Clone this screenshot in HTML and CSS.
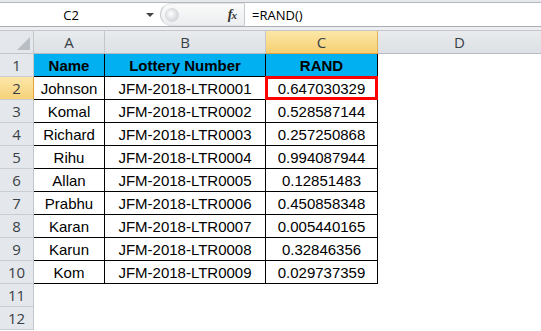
FILE: index.html
```html
<!DOCTYPE html>
<html>
<head>
<meta charset="utf-8">
<link rel="stylesheet" href="styles.css">
</head>
<body>
<div class="app">
  <div class="topstrip"></div>
  <div class="fbar">
    <div class="namebox"><span class="nametext">C2</span><span class="dd"></span></div>
    <div class="pill">
      <span class="grip"></span>
      <span class="fx"><i>f</i><i class="x">x</i></span>
    </div>
    <div class="formula">=RAND()</div>
  </div>
  <div class="band"></div>
  <div class="sheet">
    <div class="corner"><svg width="16" height="16" viewBox="0 0 16 16"><polygon points="15,2 15,15 2,15" fill="#b9bec5"/></svg></div>
    <div class="ch">A</div>
    <div class="ch">B</div>
    <div class="ch sel">C</div>
    <div class="ch last">D</div>

    <div class="rh">1</div>
    <div class="c hd">Name</div><div class="c hd">Lottery Number</div><div class="c hd">RAND</div><div class="e"></div>

    <div class="rh sel">2</div>
    <div class="c">Johnson</div><div class="c">JFM-2018-LTR0001</div><div class="c active">0.647030329</div><div class="e"></div>

    <div class="rh">3</div>
    <div class="c">Komal</div><div class="c">JFM-2018-LTR0002</div><div class="c">0.528587144</div><div class="e"></div>

    <div class="rh">4</div>
    <div class="c">Richard</div><div class="c">JFM-2018-LTR0003</div><div class="c">0.257250868</div><div class="e"></div>

    <div class="rh">5</div>
    <div class="c">Rihu</div><div class="c">JFM-2018-LTR0004</div><div class="c">0.994087944</div><div class="e"></div>

    <div class="rh">6</div>
    <div class="c">Allan</div><div class="c">JFM-2018-LTR0005</div><div class="c">0.12851483</div><div class="e"></div>

    <div class="rh">7</div>
    <div class="c">Prabhu</div><div class="c">JFM-2018-LTR0006</div><div class="c">0.450858348</div><div class="e"></div>

    <div class="rh">8</div>
    <div class="c">Karan</div><div class="c">JFM-2018-LTR0007</div><div class="c">0.005440165</div><div class="e"></div>

    <div class="rh">9</div>
    <div class="c">Karun</div><div class="c">JFM-2018-LTR0008</div><div class="c">0.32846356</div><div class="e"></div>

    <div class="rh">10</div>
    <div class="c">Kom</div><div class="c">JFM-2018-LTR0009</div><div class="c">0.029737359</div><div class="e"></div>

    <div class="rh">11</div>
    <div class="e"></div><div class="e"></div><div class="e"></div><div class="e"></div>

    <div class="rh">12</div>
    <div class="e"></div><div class="e"></div><div class="e"></div><div class="e"></div>
  </div>
</div>
</body>
</html>
```
FILE: styles.css
```css
* { box-sizing: border-box; }
html, body { margin: 0; padding: 0; background: #fff; }
body { width: 541px; height: 331px; overflow: hidden; font-family: "Liberation Sans", Arial, sans-serif; }

.app { width: 541px; }

.topstrip { height: 3px; background: #e6e8eb; border-bottom: 1px solid #b4b8bd; }

.fbar { height: 24px; display: flex; background: #fff; border-bottom: 1px solid #a8adb3; }
.namebox { width: 160px; display: flex; align-items: center; position: relative; }
.nametext { width: 142px; text-align: center; font-family: "Open Sans", sans-serif; font-size: 13px; color: #000; }
.dd { width: 0; height: 0; border-left: 4px solid transparent; border-right: 4px solid transparent; border-top: 4px solid #444; margin-left: 4px; margin-top: 1px; }

.pill { width: 85px; display: flex; align-items: center; justify-content: space-between; background: linear-gradient(#fafafa, #eceef0); border-radius: 12px 0 0 12px; border-left: 1px solid #c7cbd0; border-top: 1px solid #e0e2e5; border-bottom: 1px solid #e0e2e5; padding-left: 4px; border-right: 1px solid #c5c9ce; }
.grip { width: 14px; height: 14px; border-radius: 50%; background: radial-gradient(circle at 40% 40%, #ffffff, #d4d7db 70%); border: 1px solid #d8dbdf; }
.fx { font-family: "Liberation Serif", serif; font-size: 14px; color: #333; font-weight: bold; margin-right: 8px; letter-spacing: -1px; }
.fx .x { font-size: 11px; }

.formula { flex: 1; display: flex; align-items: center; padding-left: 7px; font-family: "Open Sans", sans-serif; font-size: 13px; color: #000; }

.band { height: 4px; background: #eceef1; border-bottom: 1px solid #c3c7cc; }

.sheet { display: grid; grid-template-columns: 34px 71px 161px 112px 1fr; grid-template-rows: repeat(13, 23px); }

.corner { background: #e4e7eb; border-right: 1px solid #c3c7cc; border-bottom: 1px solid #c3c7cc; display: flex; align-items: flex-end; justify-content: flex-end; padding: 0 2px 2px 0; }
.ch { background: linear-gradient(#e9ebee, #dde0e4); border-right: 1px solid #c3c7cc; border-bottom: 1px solid #b8bcc2; display: flex; align-items: center; justify-content: center; font-family: "Open Sans", sans-serif; font-size: 15px; color: #3a3f46; }
.ch.sel { background: linear-gradient(#fce7a8, #f6cf72); border-bottom: 1px solid #e2a43a; border-right: 1px solid #e2b25a; }
.ch.last { border-right: none; }

.rh { background: #e4e7eb; border-right: 1px solid #c3c7cc; border-bottom: 1px solid #c9cdd2; display: flex; align-items: center; justify-content: center; font-family: "Open Sans", sans-serif; font-size: 15px; color: #3a3f46; }
.rh.sel { background: linear-gradient(#fce7a8, #f6d27a); border-right: 1px solid #e2a43a; }

.c { border-right: 1px solid #000; border-bottom: 1px solid #000; display: flex; align-items: center; justify-content: center; font-size: 15px; color: #000; white-space: nowrap; }
.c.hd { background: #00b0f0; font-weight: bold; }
.c.active { position: relative; }
.c.active::after { content: ""; position: absolute; left: -1px; top: -1px; right: -1px; bottom: -1px; border: 3px solid #ff0000; }
.e { background: #fff; }
```
